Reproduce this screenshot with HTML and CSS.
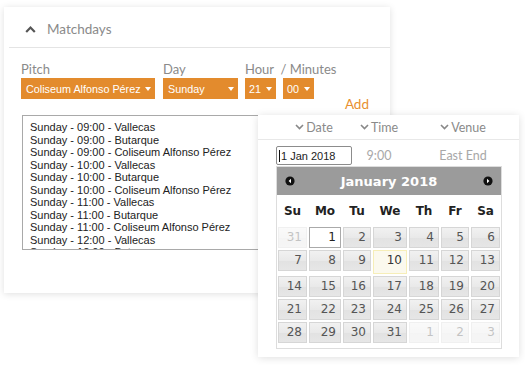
FILE: index.html
```html
<!DOCTYPE html>
<html lang="en">
<head>
    <meta charset="UTF-8">
    <meta name="viewport" content="width=device-width, initial-scale=1.0">
    <title>Matchdays</title>
    <link rel="stylesheet" href="styles.css">
</head>
<body>
<div class="stage">
    <!-- Kaart met speeldagen -->
    <div class="card matchdays">
        <div class="card-head">
            <svg class="chev-up" width="11" height="7" viewBox="0 0 11 7"><path d="M1.2 6 L5.5 1.6 L9.8 6" fill="none" stroke="#555" stroke-width="2.2"/></svg>
            <span class="card-title">Matchdays</span>
        </div>
        <div class="card-body">
            <div class="fields">
                <div class="field pitch">
                    <label>Pitch</label>
                    <div class="select">Coliseum Alfonso Pérez<span class="arrow"></span></div>
                </div>
                <div class="field day">
                    <label>Day</label>
                    <div class="select">Sunday<span class="arrow"></span></div>
                </div>
                <div class="field time">
                    <label>Hour &nbsp;/ Minutes</label>
                    <div class="time-selects">
                        <div class="select small">21<span class="arrow"></span></div>
                        <div class="select small">00<span class="arrow"></span></div>
                    </div>
                </div>
            </div>
            <div class="add-row"><span class="add">Add</span></div>
            <div class="listbox">
                <div>Sunday - 09:00 - Vallecas</div>
                <div>Sunday - 09:00 - Butarque</div>
                <div>Sunday - 09:00 - Coliseum Alfonso Pérez</div>
                <div>Sunday - 10:00 - Vallecas</div>
                <div>Sunday - 10:00 - Butarque</div>
                <div>Sunday - 10:00 - Coliseum Alfonso Pérez</div>
                <div>Sunday - 11:00 - Vallecas</div>
                <div>Sunday - 11:00 - Butarque</div>
                <div>Sunday - 11:00 - Coliseum Alfonso Pérez</div>
                <div>Sunday - 12:00 - Vallecas</div>
                <div>Sunday - 12:00 - Butarque</div>
            </div>
        </div>
    </div>

    <!-- Kaart met datumkiezer, ligt over de eerste kaart -->
    <div class="card schedule">
        <div class="sched-head">
            <div class="col-head"><svg width="9" height="6" viewBox="0 0 9 6"><path d="M1 1 L4.5 4.6 L8 1" fill="none" stroke="#888" stroke-width="1.6"/></svg>Date</div>
            <div class="col-head"><svg width="9" height="6" viewBox="0 0 9 6"><path d="M1 1 L4.5 4.6 L8 1" fill="none" stroke="#888" stroke-width="1.6"/></svg>Time</div>
            <div class="col-head"><svg width="9" height="6" viewBox="0 0 9 6"><path d="M1 1 L4.5 4.6 L8 1" fill="none" stroke="#888" stroke-width="1.6"/></svg>Venue</div>
        </div>
        <div class="sched-row">
            <div class="date-input"><span class="caret"></span>1 Jan 2018</div>
            <div class="cell-text">9:00</div>
            <div class="cell-text">East End</div>
        </div>
        <div class="datepicker">
            <div class="dp-head">
                <svg width="10" height="10" viewBox="0 0 10 10"><circle cx="5" cy="5" r="4.6" fill="#111"/><path d="M6 2.8 L3.6 5 L6 7.2 Z" fill="#fff"/></svg>
                <span class="dp-title">January 2018</span>
                <svg width="10" height="10" viewBox="0 0 10 10"><circle cx="5" cy="5" r="4.6" fill="#111"/><path d="M4 2.8 L6.4 5 L4 7.2 Z" fill="#fff"/></svg>
            </div>
            <table class="dp-table">
                <colgroup>
                    <col class="c31"><col class="c34"><col class="c30"><col class="c36"><col class="c32"><col class="c30"><col class="c31">
                </colgroup>
                <thead>
                    <tr><th>Su</th><th>Mo</th><th>Tu</th><th>We</th><th>Th</th><th>Fr</th><th>Sa</th></tr>
                </thead>
                <tbody>
                    <tr><td class="other"><a>31</a></td><td><a class="active">1</a></td><td><a>2</a></td><td><a>3</a></td><td><a>4</a></td><td><a>5</a></td><td><a>6</a></td></tr>
                    <tr><td><a>7</a></td><td><a>8</a></td><td><a>9</a></td><td><a class="today">10</a></td><td><a>11</a></td><td><a>12</a></td><td><a>13</a></td></tr>
                    <tr><td><a>14</a></td><td><a>15</a></td><td><a>16</a></td><td><a>17</a></td><td><a>18</a></td><td><a>19</a></td><td><a>20</a></td></tr>
                    <tr><td><a>21</a></td><td><a>22</a></td><td><a>23</a></td><td><a>24</a></td><td><a>25</a></td><td><a>26</a></td><td><a>27</a></td></tr>
                    <tr><td><a>28</a></td><td><a>29</a></td><td><a>30</a></td><td><a>31</a></td><td class="other"><a>1</a></td><td class="other"><a>2</a></td><td class="other"><a>3</a></td></tr>
                </tbody>
            </table>
        </div>
    </div>
</div>
</body>
</html>
```

FILE: styles.css
```css
body {
    margin: 0;
    background-color: #ffffff;
    font-family: Lato, "Open Sans", sans-serif;
}

.stage {
    position: relative;
    width: 525px;
    height: 365px;
    overflow: hidden;
}

.card {
    background-color: #ffffff;
    box-shadow: 0 1px 7px rgba(0, 0, 0, 0.13);
}

/* Eerste kaart */
.matchdays {
    margin: 7px 0 0 4px;
    width: 386px;
    height: 286px;
}

.card-head {
    box-sizing: border-box;
    height: 41px;
    margin-left: 5px;
    padding: 4px 0 0 16px;
    border-bottom: 1px solid #e4e4e4;
    display: flex;
    align-items: center;
}

.chev-up {
    margin-right: 11px;
}

.card-title {
    font-size: 13.5px;
    color: #8a8a8a;
}

.card-body {
    padding: 13px 0 0 17px;
}

.fields {
    display: flex;
}

.field label {
    display: block;
    font-size: 13px;
    line-height: 17px;
    color: #8a8a8a;
    white-space: nowrap;
}

.pitch {
    width: 134px;
    margin-right: 8px;
}

.day {
    width: 75px;
    margin-right: 7px;
}

.time-selects {
    display: flex;
    gap: 7px;
}

.select {
    box-sizing: border-box;
    height: 21px;
    padding: 0 4px 0 5px;
    background-color: #e38b2d;
    color: #ffffff;
    font: 10.8px "Liberation Sans", Arial, sans-serif;
    display: flex;
    align-items: center;
    justify-content: space-between;
    white-space: nowrap;
}

.select.small {
    width: 31px;
    padding: 0 4px;
}

.arrow {
    flex-shrink: 0;
    width: 0;
    height: 0;
    border-left: 3px solid transparent;
    border-right: 3px solid transparent;
    border-top: 4px solid #ffffff;
    margin-left: 3px;
}

.add-row {
    margin-top: -3px;
    padding-right: 21px;
    text-align: right;
    line-height: 14px;
}

.add {
    font-size: 13.5px;
    color: #e8902f;
}

.listbox {
    box-sizing: border-box;
    margin: 4px 0 0 1px;
    width: 350px;
    height: 135px;
    padding: 5px 0 0 7px;
    border: 1px solid #a9a9a9;
    overflow: hidden;
    font: 11px/12.5px "Liberation Sans", Arial, sans-serif;
    color: #222222;
}

/* Tweede kaart */
.schedule {
    position: absolute;
    left: 258px;
    top: 115px;
    width: 261px;
    height: 242px;
    box-shadow: 0 1px 8px rgba(0, 0, 0, 0.13);
}

.sched-head,
.sched-row {
    display: grid;
    grid-template-columns: 76px 54px 114px;
    padding-left: 18px;
    align-items: center;
}

.sched-head {
    height: 24px;
    border-bottom: 1px solid #e8e8e8;
}

.col-head {
    display: flex;
    align-items: center;
    justify-content: center;
    gap: 2px;
    font-size: 12.5px;
    color: #8a8a8a;
}

.sched-row {
    margin-top: 6px;
    height: 19px;
}

.date-input {
    box-sizing: border-box;
    height: 19px;
    padding-left: 2px;
    border: 1px solid #8c8c8c;
    border-radius: 2px;
    display: flex;
    align-items: center;
    font: 11px "Liberation Sans", Arial, sans-serif;
    color: #222222;
}

.caret {
    width: 1px;
    height: 12px;
    background-color: #111111;
    margin-right: 1px;
}

.cell-text {
    text-align: center;
    font-size: 12.5px;
    color: #a8a8a8;
}

/* Datumkiezer */
.datepicker {
    box-sizing: border-box;
    width: 226px;
    margin: 1px 0 0 18px;
    padding-bottom: 4px;
    border: 1px solid #dddddd;
    font-family: "DejaVu Sans", Verdana, sans-serif;
}

.dp-head {
    height: 28px;
    padding: 0 8px;
    background-color: #9b9b9b;
    display: flex;
    align-items: center;
    justify-content: space-between;
}

.dp-title {
    font-size: 13px;
    font-weight: bold;
    color: #ffffff;
}

.dp-table {
    width: 224px;
    table-layout: fixed;
    border-collapse: separate;
    border-spacing: 0;
}

.c30 { width: 30px; }
.c31 { width: 31px; }
.c32 { width: 32px; }
.c34 { width: 34px; }
.c36 { width: 36px; }

.dp-table th {
    height: 30px;
    padding: 1px 0 0 0;
    font-size: 12px;
    font-weight: bold;
    color: #222222;
    text-align: center;
}

.dp-table td {
    padding: 1px;
    vertical-align: top;
}

.dp-table a {
    box-sizing: border-box;
    display: block;
    height: 21px;
    padding-right: 4px;
    border: 1px solid #d6d6d6;
    background: linear-gradient(#f1f1f1, #e9e9e9 50%, #e2e2e2 51%, #e6e6e6);
    font-size: 12px;
    line-height: 19px;
    color: #555555;
    text-align: right;
}

.dp-table a.active {
    background: #ffffff;
    border-color: #aaaaaa;
    color: #212121;
}

.dp-table a.today {
    height: 24px;
    background: #fbf9ee;
    border-color: #f6eeb8;
    color: #363636;
}

.dp-table td.other a {
    opacity: 0.35;
}
```
